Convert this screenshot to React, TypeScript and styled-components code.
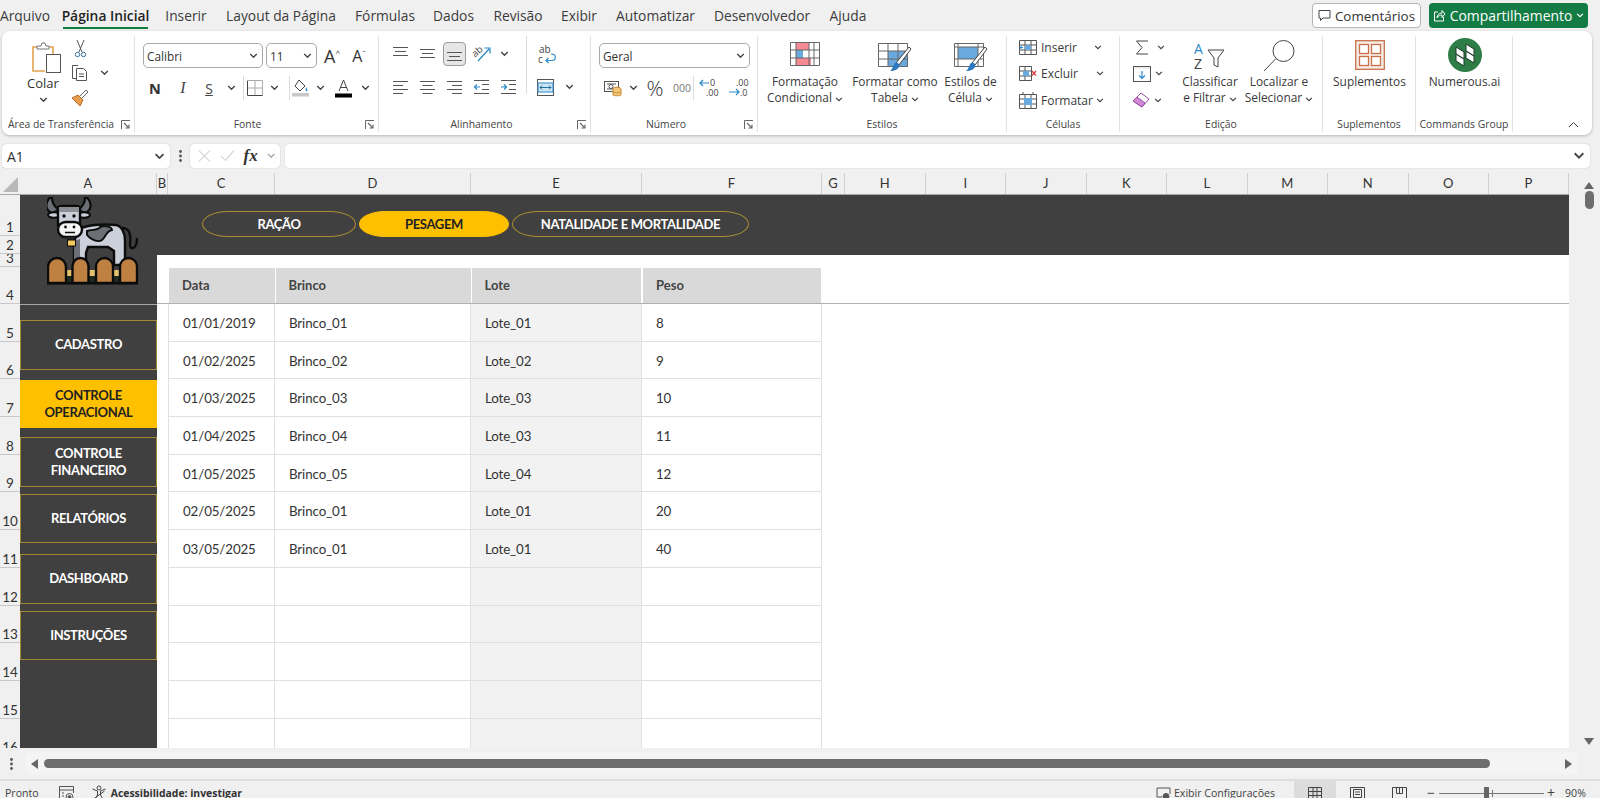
import React from "react";
import styled, { createGlobalStyle } from "styled-components";

const Global = createGlobalStyle`
  html, body { margin: 0; padding: 0; background: #f0f0f0; overflow: hidden; }
  #root { height: 798px; }
  * { box-sizing: border-box; }
`;
const UI = `"Open Sans", "Noto Sans", sans-serif`;
const CELL = `Lato, "Liberation Sans", sans-serif`;

const Page = styled.div`
  width: 1600px; height: 798px; overflow: hidden; background: #f0f0f0; font-family: ${UI}; color: #333;
  display: flex; flex-direction: column;
`;
const TabBar = styled.div`height: 31px; display: flex; align-items: center; position: relative; flex: none;`;
const Tab = styled.div<{ $w: number; $active?: boolean }>`
  width: ${p => p.$w}px; flex: none; height: 31px; line-height: 31px; text-align: center; font-size: 13.8px; white-space: nowrap; position: relative;
  color: ${p => p.$active ? "#1f1f1f" : "#3c3c3c"}; font-weight: ${p => p.$active ? 600 : 400};
  &::after { content: ""; display: ${p => p.$active ? "block" : "none"}; position: absolute; left: 14px; right: 14px; bottom: 2px; height: 2px; background: #107c41; }
`;
const TabRight = styled.div`margin-left: auto; display: flex; gap: 8px; padding-right: 12px; align-items: center;`;
const CommentBtn = styled.div`
  width: 109px; height: 25px; border: 1px solid #b5b5b5; border-radius: 4px; background: #fff; display: flex; align-items: center; justify-content: center; gap: 4px; font-size: 13.4px; color: #333;
`;
const ShareBtn = styled.div`
  width: 159px; height: 25px; border-radius: 4px; background: #137c45; color: #fff; display: flex; align-items: center; justify-content: center; gap: 4px; font-size: 13.9px; white-space: nowrap;
`;

const Ribbon = styled.div`
  flex: none; margin-left: 2px; width: 1590px; height: 104px; background: #fff; border-radius: 8px; box-shadow: 0 1px 3px rgba(0,0,0,.25);
  display: flex; position: relative; padding-top: 5px;
`;
const Group = styled.div<{ $w: number; $last?: boolean }>`
  width: ${p => p.$w}px; flex: none; height: 96px; display: flex; flex-direction: column; position: relative;
  border-right: ${p => p.$last ? "none" : "1px solid #e2e2e2"};
`;
const GroupBody = styled.div<{ $pl?: number }>`height: 80px; flex: none; display: flex; padding-left: ${p => p.$pl ?? 0}px;`;
const GroupLabel = styled.div<{ $pr?: number }>`
  height: 16px; line-height: 16px; text-align: center; font-size: 10.4px; color: #444; white-space: nowrap; padding-right: ${p => p.$pr ?? 0}px;
`;
const Launcher = styled.div`position: absolute; right: 3px; bottom: 2px; width: 10px; height: 10px; display: flex;`;
const Col = styled.div<{ $w?: number; $pl?: number; $mt?: number }>`
  display: flex; flex-direction: column; flex: none; ${p => p.$w ? `width: ${p.$w}px;` : ""} padding-left: ${p => p.$pl ?? 0}px; margin-top: ${p => p.$mt ?? 0}px;
`;
const Row = styled.div<{ $h?: number; $mt?: number }>`
  display: flex; align-items: center; flex: none; height: ${p => p.$h ?? 24}px; margin-top: ${p => p.$mt ?? 0}px;
`;
const Btn = styled.div<{ $w: number; $active?: boolean }>`
  width: ${p => p.$w}px; height: 24px; flex: none; display: flex; align-items: center; justify-content: center; position: relative; font-size: 13px;
  ${p => p.$active ? "&::before{content:'';position:absolute;left:2px;right:2px;top:0;bottom:0;background:#e6e6e6;border:1px solid #9b9b9b;border-radius:4px;}" : ""}
  & > * { position: relative; }
`;
const VSep = styled.div<{ $h?: number; $ml?: number }>`
  width: 1px; flex: none; height: ${p => p.$h ?? 24}px; background: #dcdcdc; margin-left: ${p => p.$ml ?? 0}px;
`;
const Select = styled.div<{ $w: number }>`
  width: ${p => p.$w}px; flex: none; height: 25px; border: 1px solid #a8a8a8; border-radius: 5px; display: flex; align-items: center; justify-content: space-between; padding: 0 4px 0 3px; font-size: 11.8px; color: #333; background: #fff;
`;
const BigBtn = styled.div<{ $w: number }>`
  width: ${p => p.$w}px; flex: none; display: flex; flex-direction: column; align-items: center; white-space: nowrap;
`;
const BigIcon = styled.div`height: 36px; margin-top: 2px; display: flex; align-items: center; justify-content: center;`;
const BigText = styled.div`font-size: 11.9px; line-height: 16.2px; text-align: center; color: #3a3a3a; margin-top: -1px;`;
const SmallLabel = styled.div`font-size: 12px; color: #3a3a3a; white-space: nowrap; display: flex; align-items: center; gap: 3px;`;
const CellRow = styled.div<{ $pl?: number }>`
  height: 26.5px; display: flex; align-items: center; padding-left: ${p => p.$pl ?? 12}px; flex: none;
`;
const CellIcon = styled.div`width: 22px; flex: none; display: flex; justify-content: flex-start;`;
const Bold = styled.span`font-weight: 700; font-family: ${UI}; font-size: 14.5px; color: #333;`;
const Ital = styled.span`font-style: italic; font-family: "Liberation Serif", serif; font-size: 16px; color: #444;`;
const FxMark = styled(Ital)`font-weight: 700; font-size: 17px; color: #333;`;
const Under = styled.span`text-decoration: underline; font-size: 14px; color: #444;`;
const Grow = styled.span<{ $s: number }>`font-size: ${p => p.$s}px; color: #333; line-height: 1;`;
const Caret = styled.sup`font-size: 8px;`;
const Percent = styled.span`font-size: 21px; font-weight: 300; color: #333; line-height: 1;`;
const Thin = styled.span`font-size: 10.5px; color: #777;`;
const CollapseBtn = styled.div`position: absolute; right: 13px; bottom: 7px; display: flex;`;

const FormulaBar = styled.div`flex: none; margin-top: 9px; height: 24px; padding-left: 2px; display: flex; align-items: stretch;`;
const Box = styled.div<{ $w: number }>`
  width: ${p => p.$w}px; flex: none; background: #fff; border-radius: 4px; box-shadow: 0 0 1px rgba(0,0,0,.35); display: flex; align-items: center; justify-content: space-between; padding: 0 5px; font-size: 14px; color: #333;
`;
const Dots = styled.div`width: 20px; flex: none; display: flex; align-items: center; justify-content: center;`;
const Spacer = styled.div<{ $w: number }>`width: ${p => p.$w}px; flex: none;`;
const FxItems = styled.div`display: flex; align-items: center; gap: 9px; width: 100%; padding-left: 3px;`;

const SheetWrap = styled.div`flex: none; margin-top: 5px; height: 575px; display: flex;`;
const SheetLeft = styled.div`width: 1569px; flex: none; display: flex; flex-direction: column;`;
const ColHeads = styled.div`height: 22px; flex: none; display: flex; background: #f0f0f0; border-bottom: 1px solid #a8a8a8;`;
const Corner = styled.div`width: 20px; flex: none; display: flex; align-items: flex-end; justify-content: flex-end; padding: 0 2px 2px 0;`;
const ColHead = styled.div<{ $w: number }>`
  width: ${p => p.$w}px; flex: none; text-align: center; font-family: ${CELL}; font-size: 13px; line-height: 21px; color: #333; border-right: 1px solid #cfcfcf;
`;
const SheetBody = styled.div`height: 553px; flex: none; display: flex; overflow: hidden;`;
const RowHeads = styled.div`width: 20px; flex: none; display: flex; flex-direction: column;`;
const RowHead = styled.div<{ $h: number }>`
  height: ${p => p.$h}px; flex: none; border-bottom: 1px solid #c8c8c8; font-family: ${CELL}; font-size: 13.5px; line-height: 14px; color: #333; display: flex; align-items: flex-end; justify-content: center; padding-bottom: 1px; overflow: hidden;
`;
const Sidebar = styled.div`width: 137px; flex: none; background: #404040; display: flex; flex-direction: column; padding-bottom: 20px;`;
const CowArea = styled.div`height: 110px; flex: none; border-bottom: 1px solid #a8a8a8; padding: 2px 0 0 27px; display: flex; margin-bottom: 15px;`;
const NavBtn = styled.div<{ $h: number; $mt?: number; $active?: boolean }>`
  height: ${p => p.$h}px; margin-top: ${p => p.$mt ?? 0}px; flex: none; width: 137px; display: flex; align-items: center; justify-content: center; text-align: center;
  font-family: ${CELL}; font-weight: 700; font-size: 13px; letter-spacing: -0.35px; line-height: 17px; padding-bottom: 1px;
  color: ${p => p.$active ? "#222" : "#fff"}; background: ${p => p.$active ? "#ffc000" : "#404040"};
  border: 1px solid ${p => p.$active ? "#ffc000" : "#a38836"};
`;
const Main = styled.div`flex: 1; display: flex; flex-direction: column; background: #fff; min-width: 0;`;
const Band = styled.div`height: 60px; flex: none; background: #404040; display: flex; gap: 3px; padding: 16px 0 0 45px;`;
const Pill = styled.div<{ $w: number; $active?: boolean }>`
  width: ${p => p.$w}px; height: 26px; flex: none; border-radius: 26px / 13px; display: flex; align-items: center; justify-content: center;
  font-family: ${CELL}; font-weight: 700; font-size: 13px; letter-spacing: -0.35px;
  color: ${p => p.$active ? "#222" : "#fff"}; background: ${p => p.$active ? "#ffc000" : "transparent"};
  border: 1px solid ${p => p.$active ? "#ffc000" : "#a98c33"};
`;
const HeadZone = styled.div`height: 49px; flex: none; border-bottom: 1px solid #b0b0b0; padding: 13px 0 0 12px; display: flex;`;
const HeadCell = styled.div<{ $w: number; $ml: number }>`
  width: ${p => p.$w}px; margin-left: ${p => p.$ml}px; height: 35px; flex: none; background: #d9d9d9; font-family: ${CELL}; font-weight: 700; font-size: 13px; color: #444; padding-left: 13px; line-height: 35px;
`;
const TRow = styled.div`height: 37.7px; flex: none; display: flex; margin-left: 11px;`;
const TCell = styled.div<{ $w: number; $first?: boolean; $shade?: boolean }>`
  width: ${p => p.$w}px; flex: none; font-family: ${CELL}; font-size: 13.3px; letter-spacing: -0.1px; color: #333; padding-left: 14px; line-height: 38px;
  border-bottom: 1px solid #e0e0e0; border-right: 1px solid #e0e0e0; ${p => p.$first ? "border-left: 1px solid #e0e0e0;" : ""}
  background: ${p => p.$shade ? "#f2f2f2" : "#fff"};
`;
const VScroll = styled.div`width: 31px; flex: none; display: flex; flex-direction: column; align-items: center; padding: 9px 0 3px 9px;`;
const VThumb = styled.div`width: 9px; height: 18px; background: #6e6e6e; border-radius: 5px; margin-top: 2px;`;
const VDown = styled.div`margin-top: auto; display: flex;`;
const HScrollBar = styled.div`height: 33px; flex: none; display: flex; align-items: center; border-bottom: 2px solid #dedede;`;
const HDots = styled.div`width: 25px; flex: none; display: flex; justify-content: center; padding-right: 3px;`;
const HTrack = styled.div`width: 1553px; height: 23px; flex: none; background: #f4f4f4; border-radius: 6px; display: flex; align-items: center; padding: 0 4px 0 6px;`;
const HThumb = styled.div`width: 1446px; height: 9px; background: #6e6e6e; border-radius: 5px; margin-left: 6px;`;
const HEnd = styled.div`margin-left: auto; margin-right: 2px; display: flex;`;
const Status = styled.div`height: 24px; flex: none; display: flex; align-items: center; font-size: 10.6px; color: #444; padding-left: 5px; white-space: nowrap;`;
const StatusText = styled.span<{ $bold?: boolean }>`font-weight: ${p => p.$bold ? 700 : 400}; color: ${p => p.$bold ? "#333" : "#444"}; font-size: ${p => p.$bold ? "10.4px" : "10.6px"};`;
const ZoomSign = styled.span`font-size: 14px; color: #444; line-height: 1;`;
const StatusGap = styled.div<{ $w: number }>`width: ${p => p.$w}px; flex: none; display: flex; justify-content: center;`;
const ViewBtn = styled.div<{ $active?: boolean }>`
  width: 42px; height: 24px; flex: none; display: flex; align-items: center; justify-content: center; background: ${p => p.$active ? "#dcdcdc" : "transparent"};
`;
const Slider = styled.div`width: 105px; height: 1px; background: #777; position: relative; flex: none;`;
const SliderThumb = styled.div`position: absolute; left: 45px; top: -6px; width: 5px; height: 13px; background: #666;`;
const SliderTick = styled.div`position: absolute; left: 53px; top: -3px; width: 1px; height: 7px; background: #777;`;

/* icons */
const Chev = ({ c = "#444", w = 9 }: { c?: string; w?: number }) => (
  <svg width={w} height={w * 0.62} viewBox="0 0 9 6"><path d="M1 1l3.5 3.5L8 1" fill="none" stroke={c} strokeWidth="1.5" /></svg>
);
const LauncherIcon = () => (
  <svg width="10" height="10" viewBox="0 0 10 10" fill="none" stroke="#666"><path d="M.5 9V.5H9" /><path d="M3 3l5 5M8 4.500V8H4.500" strokeWidth="1.100" /></svg>
);
const Paste = () => (
  <svg width="37" height="33" viewBox="-6 0 37 33" fill="none">
    <path d="M9 6H2v24h12" stroke="#e2a24f" strokeWidth="1.600" />
    <path d="M17 6h5v7" stroke="#e2a24f" strokeWidth="1.600" />
    <path d="M6 8V5h4l1-3h3l1 3h3v3z" fill="#fff" stroke="#777" />
    <rect x="15.500" y="13.500" width="14" height="18" fill="#fff" stroke="#555" />
  </svg>
);
const Scissors = () => (
  <svg width="13" height="19" viewBox="0 0 13 19" fill="none">
    <path d="M3 1l5 12M10 1L5 13" stroke="#555" />
    <circle cx="3.500" cy="15.500" r="2.200" stroke="#2f6f9f" /><circle cx="9.500" cy="15.500" r="2.200" stroke="#2f6f9f" />
  </svg>
);
const Copy = () => (
  <svg width="18" height="18" viewBox="0 0 18 18" fill="none" stroke="#555">
    <path d="M7 1.500H1.500v13H5" /><path d="M5.500 4.500h7l3 3v9h-10z" fill="#fff" /><path d="M8 10h5M8 12.500h5" />
  </svg>
);
const Brush = () => (
  <svg width="18" height="18" viewBox="0 0 18 18" fill="none">
    <path d="M1 9l6-3 5 5-3 6z" fill="#e8a050" stroke="#b86a20" />
    <path d="M9 7l6-6 2 2-6 6" stroke="#666" fill="#fff" />
  </svg>
);
const Lines = ({ ys, xs }: { ys: number[]; xs: [number, number][] }) => (
  <svg width="17" height="16" viewBox="0 0 17 16" stroke="#555" fill="none">
    {ys.map((y, i) => <path key={i} d={`M${xs[i][0]} ${y}H${xs[i][1]}`} />)}
  </svg>
);
const AlignTop = () => <Lines ys={[1.5, 5.5, 9.5]} xs={[[1, 16], [3, 14], [1, 16]]} />;
const AlignMid = () => <Lines ys={[3.5, 7.5, 11.5]} xs={[[1, 16], [3, 14], [1, 16]]} />;
const AlignBot = () => <Lines ys={[6.5, 10.5, 14.5]} xs={[[1, 16], [3, 14], [1, 16]]} />;
const AlignL = () => <Lines ys={[2.5, 6.5, 10.5, 14.5]} xs={[[1, 16], [1, 11], [1, 16], [1, 11]]} />;
const AlignC = () => <Lines ys={[2.5, 6.5, 10.5, 14.5]} xs={[[1, 16], [3.5, 13.5], [1, 16], [3.5, 13.5]]} />;
const AlignR = () => <Lines ys={[2.5, 6.5, 10.5, 14.5]} xs={[[1, 16], [6, 16], [1, 16], [6, 16]]} />;
const Indent = ({ out }: { out?: boolean }) => (
  <svg width="17" height="16" viewBox="0 0 17 16" fill="none">
    <path d="M1 1.500h15M1 14.500h15M9 5.500h7M9 10.500h7" stroke="#555" />
    <path d={out ? "M7 8H1.500M4 5.500L1.500 8 4 10.500" : "M1 8h5.500M4 5.500L6.500 8 4 10.500"} stroke="#2b88c8" strokeWidth="1.200" />
  </svg>
);
const Orient = () => (
  <svg width="22" height="20" viewBox="-1 -1 22 20" fill="none">
    <text x="1" y="11" fontSize="9.500" fontFamily="Open Sans" fill="#444" transform="rotate(-40 4 9)">ab</text>
    <path d="M6 16L17 4M12.500 3h5.500v5.500" stroke="#2b88c8" strokeWidth="1.200" />
  </svg>
);
const WrapIco = () => (
  <svg width="19" height="21" viewBox="0 0 19 21" fill="none">
    <text x="2" y="9" fontSize="10" fontFamily="Open Sans" fill="#444">ab</text>
    <text x="1" y="19" fontSize="10" fontFamily="Open Sans" fill="#444">c</text>
    <path d="M14 10h1a2.500 2.500 0 010 6.500H9M11.500 14L9 16.500l2.500 2.500" stroke="#2b88c8" strokeWidth="1.200" />
  </svg>
);
const Merge = () => (
  <svg width="17" height="17" viewBox="0 0 17 17" fill="none">
    <rect x=".5" y=".5" width="16" height="16" stroke="#555" />
    <rect x="1" y="4" width="15" height="9" fill="#cfe6f5" stroke="#2b88c8" />
    <path d="M3 8.500h11M5 6.500l-2 2 2 2M12 6.500l2 2-2 2" stroke="#1f6f9f" />
  </svg>
);
const Borders = () => (
  <svg width="16" height="16" viewBox="0 0 16 16" fill="none">
    <path d="M.5.500h15v15H.5z" stroke="#aaa" /><path d="M8 .5v15M.5 8h15" stroke="#aaa" />
    <path d="M.5 15.500h15M.5 1v14" stroke="#444" />
  </svg>
);
const Fill = () => (
  <svg width="17" height="18" viewBox="0 0 17 18" fill="none">
    <path d="M7 1l6 6-5 5-5-5z" stroke="#444" fill="#fff" />
    <path d="M14 8c1 2 2 3 1 4s-2-1-1-4z" fill="#2b88c8" />
    <rect y="14" width="17" height="3.500" fill="#c8c8c8" />
  </svg>
);
const FontColor = () => (
  <svg width="17" height="19" viewBox="0 0 17 19" fill="none">
    <path d="M4 12l4.500-11L13 12M5.500 8.500h6" stroke="#444" />
    <rect y="14.500" width="17" height="4" fill="#000" />
  </svg>
);
const Accounting = () => (
  <svg width="18" height="17" viewBox="0 0 18 17" fill="none">
    <rect x=".5" y="1.500" width="14" height="10" stroke="#555" fill="#fff" />
    <path d="M3 4h9M3 9h6" stroke="#555" /><circle cx="7" cy="6.500" r="2" stroke="#555" />
    <ellipse cx="13" cy="9" rx="4" ry="1.800" fill="#f2c77e" stroke="#c98a30" />
    <path d="M9 9v6c0 1 8 1 8 0V9" fill="#f2c77e" stroke="#c98a30" />
    <path d="M9 12c0 1 8 1 8 0" stroke="#c98a30" />
  </svg>
);
const Dec = ({ more }: { more?: boolean }) => (
  <svg width="24" height="20" viewBox="0 0 24 20">
    <text x={more ? 8 : 11} y="8" fontSize="9" fontFamily="Open Sans" fill="#444">{more ? ".00" : "0"}</text>
    <text x={more ? 12 : 7} y="18" fontSize="9" fontFamily="Open Sans" fill="#444">{more ? ".0" : ".00"}</text>
    <path d={more ? "M1 14h10M8 11l3 3-3 3" : "M10 5H1M4 2L1 5l3 3"} stroke="#2b88c8" fill="none" strokeWidth="1.200" />
  </svg>
);
const CondFormat = () => (
  <svg width="30" height="28" viewBox="0 0 30 28" fill="none">
    <rect x=".5" y=".5" width="29" height="23" fill="#fff" />
    <rect x="6" y="1" width="13" height="7" fill="#f58a93" />
    <rect x="6" y="16" width="15" height="7" fill="#f58a93" />
    <rect x="6" y="8" width="7" height="8" fill="#6aa9de" />
    <path d="M.5.500h29v23H.500zM.5 8h29M.5 16h29M6 .5v23M19 .5v23M24 .5v23" stroke="#666" />
  </svg>
);
const TableBrush = ({ full }: { full?: boolean }) => (
  <svg width="34" height="30" viewBox="0 -2 34 30" fill="none">
    <rect x=".5" y=".5" width="29" height="23" fill="#fff" />
    {full ? <rect x="4" y="4" width="20" height="12" fill="#6aa9de" /> : <rect x="10" y="8" width="20" height="16" fill="#6aa9de" />}
    <path d={full ? "M.5.500h29v23H.500zM.5 4h29M.5 16h29M4 .5v23M24 .5v23" : "M.5.500h29v23H.500zM.5 8h29M.5 16h29M10 .5v23M20 .5v23"} stroke="#666" />
    <path d="M18 20L31 4l2 2-12 16" fill="#fff" stroke="#444" />
    <path d="M17 20c3-1 5 1 4 4-1 2-4 4-9 4 3-2 3-6 5-8z" fill="#2b78c0" />
  </svg>
);
const InsertIco = () => (
  <svg width="18" height="15" viewBox="0 0 18 15" fill="none">
    <path d="M.5.500h17v14H.500zM.5 5h17M.5 10h17M6 .5v14M12 .5v14" stroke="#555" />
    <rect x="6" y="5" width="6" height="5" fill="#6aa9de" />
    <path d="M4 7.500h-3M3 5.500L1 7.500l2 2" stroke="#2b88c8" />
  </svg>
);
const DeleteIco = () => (
  <svg width="18" height="15" viewBox="0 0 18 15" fill="none">
    <path d="M.5.500h12v14H.500zM.5 5h12M.5 10h12M6 .5v14" stroke="#555" />
    <rect x="4" y="5" width="6" height="5" fill="#6aa9de" />
    <path d="M13 5l4 4.500M17 5l-4 4.500" stroke="#d83b3b" strokeWidth="1.200" />
  </svg>
);
const FormatIco = () => (
  <svg width="18" height="17" viewBox="0 0 18 17" fill="none">
    <path d="M.5 2.500h17v14H.500zM.5 7h17M.5 12h17M6 2.500v14M12 2.500v14" stroke="#555" />
    <rect x="5" y="6" width="8" height="7" fill="#6aa9de" />
    <path d="M4 0v3M14 0v3" stroke="#555" />
  </svg>
);
const FillDown = () => (
  <svg width="18" height="16" viewBox="0 0 18 16" fill="none">
    <rect x=".5" y=".5" width="17" height="15" stroke="#555" fill="#eee" />
    <rect x="1" y="3" width="16" height="12" fill="#fff" />
    <path d="M9 5v7M6 9.500l3 3 3-3" stroke="#2b88c8" strokeWidth="1.200" />
  </svg>
);
const Eraser = () => (
  <svg width="18" height="16" viewBox="0 0 18 16" fill="none">
    <path d="M1 9l8-8 8 6-7 8z" fill="#fff" stroke="#9a4fa8" />
    <path d="M1 9l4-4 8 6-3 4z" fill="#d28ad6" stroke="#9a4fa8" />
  </svg>
);
const SortFilter = () => (
  <svg width="32" height="31" viewBox="0 0 32 31" fill="none">
    <text x="0" y="13" fontSize="14" fontFamily="Open Sans" fill="#2b88c8">A</text>
    <text x="0" y="28" fontSize="14" fontFamily="Open Sans" fill="#444">Z</text>
    <path d="M14 9h16l-6 8v9l-4-2v-7z" fill="#fff" stroke="#444" />
  </svg>
);
const Search = () => (
  <svg width="32" height="32" viewBox="0 0 32 32" fill="none" stroke="#444">
    <circle cx="20.500" cy="11" r="10.500" /><path d="M13 18.500L1 31" />
  </svg>
);
const Suppl = () => (
  <svg width="30" height="33" viewBox="0 0 30 33" fill="none" stroke="#c9704a" strokeWidth="1.300">
    <rect x=".7" y=".7" width="28.600" height="28.600" fill="#f7ece6" />
    <rect x="4.500" y="4.500" width="9" height="9" fill="#fff" /><rect x="16.500" y="4.500" width="9" height="9" fill="#fff" />
    <rect x="4.500" y="16.500" width="9" height="9" fill="#fff" /><rect x="16.500" y="16.500" width="9" height="9" fill="#fff" />
  </svg>
);
const Numerous = () => (
  <svg width="34" height="37" viewBox="0 0 34 37">
    <circle cx="17" cy="17" r="17" fill="#2e7d46" />
    <path d="M8 9l8 5v14l-8-5zM18 6l8 5v14l-8-5z" fill="#fff" stroke="#1d3b28" strokeWidth="1" />
    <path d="M8 16l8 5M18 13l8 5" stroke="#1d3b28" strokeWidth="1.200" fill="none" />
  </svg>
);
const Sigma = () => (
  <svg width="14" height="15" viewBox="0 0 14 15" fill="none" stroke="#444"><path d="M13 1H1.500L7 7.500 1.500 14H13" /></svg>
);
const Bubble = () => (
  <svg width="13" height="13" viewBox="0 0 13 13" fill="none" stroke="#444"><path d="M1 1.500h11v7.500H5L2.500 11.500V9H1z" /></svg>
);
const Share = () => (
  <svg width="13" height="13" viewBox="0 0 13 13" fill="none" stroke="#fff"><path d="M5 3H1.500v9h9V8" /><path d="M4 9c0-3 2-5 5-5V1.500l3 3.500-3 3.500V6c-2 0-4 1-5 3z" /></svg>
);
const Cow = () => (
  <svg width="92" height="90" viewBox="7 4 92 90">
    <path d="M82 35C90 35 91 42 90 52C90 57 97 57 97 45" fill="none" stroke="#0c0c0c" strokeWidth="2.400" />
    <path d="M38 36C50 31 68 31 76 32C82 33 85 40 85 48V72H74V58L68 54H48L46 60V72H34V50z" fill="#ccd0da" stroke="#0c0c0c" strokeWidth="2.400" />
    <path d="M34 48L40 46V70H34z" fill="#6d6f77" />
    <path d="M47 38C52 36 58 38 60 34C66 32 72 34 72 37C66 38 66 44 62 47C58 50 50 46 47 42z" fill="#6d6f77" stroke="#0c0c0c" strokeWidth="1.900" />
    <path d="M9.500 5C5 10 5 17 12 20L19 17C15 14 12 11 12 5z" fill="#6d6f77" stroke="#0c0c0c" strokeWidth="2.200" />
    <path d="M47.500 5C52 10 52 17 45 20L38 17C42 14 45 11 45 5z" fill="#6d6f77" stroke="#0c0c0c" strokeWidth="2.200" />
    <ellipse cx="14" cy="22" rx="6" ry="2.800" fill="#ccd0da" stroke="#0c0c0c" strokeWidth="2" />
    <ellipse cx="44" cy="22" rx="6" ry="2.800" fill="#ccd0da" stroke="#0c0c0c" strokeWidth="2" />
    <path d="M18 16C18 14 20 13 22 13H36C38 13 40 14 40 16V32H18z" fill="#ccd0da" stroke="#0c0c0c" strokeWidth="2.400" />
    <path d="M19 14H39V19H19z" fill="#8c8e96" />
    <circle cx="24" cy="23" r="1.700" fill="#0c0c0c" /><circle cx="34" cy="23" r="1.700" fill="#0c0c0c" />
    <rect x="18" y="29" width="24" height="15" rx="7.500" fill="#f4f4f4" stroke="#0c0c0c" strokeWidth="2.400" />
    <circle cx="25.500" cy="34" r="1.400" fill="#0c0c0c" /><circle cx="34" cy="34" r="1.400" fill="#0c0c0c" />
    <path d="M25 39.500h10" stroke="#0c0c0c" strokeWidth="1.500" />
    <path d="M26 44h9l-1 3h-7z" fill="#222" />
    <rect x="27.500" y="47" width="8" height="6" fill="#f2c95c" stroke="#0c0c0c" strokeWidth="1" />
    <rect x="26" y="77" width="6" height="6" fill="#e3c26b" /><rect x="48" y="77" width="8" height="6" fill="#e3c26b" /><rect x="73" y="77" width="7" height="6" fill="#e3c26b" />
    <rect x="26" y="83" width="6" height="6" fill="#1d2a1d" /><rect x="48" y="83" width="8" height="6" fill="#1d2a1d" /><rect x="73" y="83" width="7" height="6" fill="#1d2a1d" />
    {[[8, 18], [32.500, 16], [56, 17], [80, 17]].map(([x, w]) => (
      <path key={x} d={`M${x} 90V${65 + w / 2}a${w / 2} ${w / 2} 0 01${w} 0V90z`} fill="#bf8142" stroke="#0c0c0c" strokeWidth="2.400" />
    ))}
    <rect x="7" y="89" width="91" height="2.500" fill="#0c0c0c" />
  </svg>
);
const Tri = ({ d }: { d: "l" | "r" | "u" | "d" }) => {
  const p = { l: "M7 0v10L0 5z", r: "M0 0v10l7-5z", u: "M0 7h10L5 0z", d: "M0 0h10L5 7z" }[d];
  const w = d === "l" || d === "r" ? 7 : 10;
  const h = d === "l" || d === "r" ? 10 : 7;
  return <svg width={w} height={h} viewBox={`0 0 ${w} ${h}`}><path d={p} fill="#666" /></svg>;
};
const VDots = () => (
  <svg width="3" height="12" viewBox="0 0 3 12" fill="#555"><circle cx="1.500" cy="1.500" r="1.400" /><circle cx="1.500" cy="6" r="1.400" /><circle cx="1.500" cy="10.500" r="1.400" /></svg>
);

const columns: [string, number][] = [["B", 11], ["C", 107], ["D", 196], ["E", 171], ["F", 180], ["G", 23], ["H", 80.5], ["I", 80.5], ["J", 80.5], ["K", 80.5], ["L", 80.5], ["M", 80.5], ["N", 80.5], ["O", 80.5], ["P", 80]];
const rowHeads: [string, number][] = [["1", 41], ["2", 18], ["3", 13], ["4", 37], ...[5, 6, 7, 8, 9, 10, 11, 12, 13, 14, 15, 16].map((n): [string, number] => [String(n), 37.7])];
const widths = [107, 196, 171, 180];
const headCells: [string, number, number][] = [["Data", 105.5, 0], ["Brinco", 195, 1], ["Lote", 169.5, 1], ["Peso", 177.5, 2]];
const data = [
  ["01/01/2019", "Brinco_01", "Lote_01", "8"],
  ["01/02/2025", "Brinco_02", "Lote_02", "9"],
  ["01/03/2025", "Brinco_03", "Lote_03", "10"],
  ["01/04/2025", "Brinco_04", "Lote_03", "11"],
  ["01/05/2025", "Brinco_05", "Lote_04", "12"],
  ["02/05/2025", "Brinco_01", "Lote_01", "20"],
  ["03/05/2025", "Brinco_01", "Lote_01", "40"],
  ["", "", "", ""], ["", "", "", ""], ["", "", "", ""], ["", "", "", ""], ["", "", "", ""],
];
const tabs: [string, number, boolean?][] = [["Arquivo", 49], ["Página Inicial", 113, true], ["Inserir", 48], ["Layout da Página", 142], ["Fórmulas", 66], ["Dados", 71], ["Revisão", 58], ["Exibir", 64], ["Automatizar", 89], ["Desenvolvedor", 124], ["Ajuda", 48]];

export default function App() {
  return (
    <Page>
      <Global />
      <TabBar>
        {tabs.map(([t, w, a]) => <Tab key={t} $w={w} $active={a}>{t}</Tab>)}
        <TabRight>
          <CommentBtn><Bubble />Comentários</CommentBtn>
          <ShareBtn><Share />Compartilhamento <Chev c="#fff" w={8} /></ShareBtn>
        </TabRight>
      </TabBar>

      <Ribbon>
        <Group $w={133}>
          <GroupBody $pl={20}>
            <Col $w={42}>
              <Row $h={36} $mt={3}><Btn $w={42}><Paste /></Btn></Row>
              <Row $h={18} $mt={-1}><Btn $w={42}>Colar</Btn></Row>
              <Row $h={12} $mt={2}><Btn $w={42}><Chev /></Btn></Row>
            </Col>
            <Col $w={60} $pl={4}>
              <Row $h={24}><Btn $w={24}><Scissors /></Btn></Row>
              <Row $h={25}><Btn $w={24}><Copy /></Btn><Btn $w={24}><Chev /></Btn></Row>
              <Row $h={25}><Btn $w={24}><Brush /></Btn></Row>
            </Col>
          </GroupBody>
          <GroupLabel $pr={14}>Área de Transferência</GroupLabel>
          <Launcher><LauncherIcon /></Launcher>
        </Group>

        <Group $w={244}>
          <GroupBody $pl={8}>
            <Col>
              <Row $h={25} $mt={7}>
                <Select $w={120}>Calibri<Chev /></Select>
                <Spacer $w={3} />
                <Select $w={51}>11<Chev /></Select>
                <Btn $w={30}><Grow $s={18}>A<Caret>^</Caret></Grow></Btn>
                <Btn $w={24}><Grow $s={16}>A<Caret>ˇ</Caret></Grow></Btn>
              </Row>
              <Row $h={24} $mt={8}>
                <Btn $w={24}><Bold>N</Bold></Btn>
                <Btn $w={32}><Ital>I</Ital></Btn>
                <Btn $w={20}><Under>S</Under></Btn>
                <Btn $w={24}><Chev /></Btn>
                <VSep />
                <Btn $w={21}><Borders /></Btn>
                <Btn $w={18}><Chev /></Btn>
                <VSep $ml={6} />
                <Btn $w={20}><Fill /></Btn>
                <Btn $w={20}><Chev /></Btn>
                <Btn $w={26}><FontColor /></Btn>
                <Btn $w={18}><Chev /></Btn>
              </Row>
            </Col>
          </GroupBody>
          <GroupLabel $pr={18}>Fonte</GroupLabel>
          <Launcher><LauncherIcon /></Launcher>
        </Group>

        <Group $w={212}>
          <GroupBody $pl={8}>
            <Col $w={139}>
              <Row $h={26} $mt={5}>
                <Btn $w={27}><AlignTop /></Btn><Btn $w={27}><AlignMid /></Btn>
                <Btn $w={27} $active><AlignBot /></Btn><Btn $w={27}><Orient /></Btn><Btn $w={18}><Chev /></Btn>
              </Row>
              <Row $h={24} $mt={8}>
                <Btn $w={27}><AlignL /></Btn><Btn $w={27}><AlignC /></Btn><Btn $w={27}><AlignR /></Btn>
                <Btn $w={27}><Indent out /></Btn><Btn $w={27}><Indent /></Btn>
              </Row>
            </Col>
            <VSep $h={58} />
            <Col>
              <Row $h={26} $mt={5}><Btn $w={38}><WrapIco /></Btn></Row>
              <Row $h={24} $mt={8}><Btn $w={36}><Merge /></Btn><Btn $w={12}><Chev /></Btn></Row>
            </Col>
          </GroupBody>
          <GroupLabel $pr={6}>Alinhamento</GroupLabel>
          <Launcher><LauncherIcon /></Launcher>
        </Group>

        <Group $w={167}>
          <GroupBody $pl={8}>
            <Col>
              <Row $h={25} $mt={7}><Select $w={151}>Geral<Chev /></Select></Row>
              <Row $h={24} $mt={8}>
                <Btn $w={28}><Accounting /></Btn><Btn $w={12}><Chev /></Btn>
                <Btn $w={32}><Percent>%</Percent></Btn>
                <Btn $w={22}><Thin>000</Thin></Btn>
                <VSep />
                <Btn $w={34}><Dec /></Btn><Btn $w={24}><Dec more /></Btn>
              </Row>
            </Col>
          </GroupBody>
          <GroupLabel $pr={16}>Número</GroupLabel>
          <Launcher><LauncherIcon /></Launcher>
        </Group>

        <Group $w={249}>
          <GroupBody>
            <BigBtn $w={94}><BigIcon><CondFormat /></BigIcon><BigText>Formatação<br />Condicional <Chev w={8} /></BigText></BigBtn>
            <BigBtn $w={86}><BigIcon><TableBrush /></BigIcon><BigText>Formatar como<br />Tabela <Chev w={8} /></BigText></BigBtn>
            <BigBtn $w={65}><BigIcon><TableBrush full /></BigIcon><BigText>Estilos de<br />Célula <Chev w={8} /></BigText></BigBtn>
          </GroupBody>
          <GroupLabel>Estilos</GroupLabel>
        </Group>

        <Group $w={113}>
          <GroupBody>
            <Col $w={112} $mt={-2}>
              <CellRow><CellIcon><InsertIco /></CellIcon><SmallLabel>Inserir<Spacer $w={11} /><Chev w={8} /></SmallLabel></CellRow>
              <CellRow><CellIcon><DeleteIco /></CellIcon><SmallLabel>Excluir<Spacer $w={12} /><Chev w={8} /></SmallLabel></CellRow>
              <CellRow><CellIcon><FormatIco /></CellIcon><SmallLabel>Formatar<Chev w={8} /></SmallLabel></CellRow>
            </Col>
          </GroupBody>
          <GroupLabel>Células</GroupLabel>
        </Group>

        <Group $w={203}>
          <GroupBody>
            <Col $w={56} $mt={-2}>
              <CellRow $pl={15}><CellIcon><Sigma /></CellIcon><Chev w={8} /></CellRow>
              <CellRow $pl={13}><CellIcon><FillDown /></CellIcon><Chev w={8} /></CellRow>
              <CellRow $pl={12}><CellIcon><Eraser /></CellIcon><Chev w={8} /></CellRow>
            </Col>
            <BigBtn $w={68}><BigIcon><SortFilter /></BigIcon><BigText>Classificar<br />e Filtrar <Chev w={8} /></BigText></BigBtn>
            <BigBtn $w={70}><BigIcon><Search /></BigIcon><BigText>Localizar e<br />Selecionar <Chev w={8} /></BigText></BigBtn>
          </GroupBody>
          <GroupLabel>Edição</GroupLabel>
        </Group>

        <Group $w={93}>
          <GroupBody>
            <BigBtn $w={93}><BigIcon><Suppl /></BigIcon><BigText>Suplementos</BigText></BigBtn>
          </GroupBody>
          <GroupLabel>Suplementos</GroupLabel>
        </Group>

        <Group $w={97}>
          <GroupBody>
            <BigBtn $w={97}><BigIcon><Numerous /></BigIcon><BigText>Numerous.ai</BigText></BigBtn>
          </GroupBody>
          <GroupLabel>Commands Group</GroupLabel>
        </Group>
        <CollapseBtn><svg width="11" height="7" viewBox="0 0 11 7" fill="none" stroke="#444"><path d="M1 6l4.500-4.500L10 6" /></svg></CollapseBtn>
      </Ribbon>

      <FormulaBar>
        <Box $w={168}>A1<Chev c="#444" w={11} /></Box>
        <Dots><VDots /></Dots>
        <Box $w={90}>
          <FxItems>
            <svg width="14" height="14" viewBox="0 0 14 14" stroke="#bbb" fill="none"><path d="M1 1l12 12M13 1L1 13" /></svg>
            <svg width="16" height="14" viewBox="0 0 16 14" stroke="#bbb" fill="none"><path d="M1 7l5 5L15 1" /></svg>
            <FxMark>fx</FxMark>
            <Chev c="#aaa" w={9} />
          </FxItems>
        </Box>
        <Spacer $w={5} />
        <Box $w={1305}><span /><Chev c="#444" w={12} /></Box>
      </FormulaBar>

      <SheetWrap>
        <SheetLeft>
          <ColHeads>
            <Corner><svg width="15" height="15" viewBox="0 0 15 15"><path d="M15 0v15H0z" fill="#b8b8b8" /></svg></Corner>
            <ColHead $w={137}>A</ColHead>
            {columns.map(([c, w]) => <ColHead key={c} $w={w}>{c}</ColHead>)}
          </ColHeads>
          <SheetBody>
            <RowHeads>
              {rowHeads.map(([n, h]) => <RowHead key={n} $h={h}>{n}</RowHead>)}
            </RowHeads>
            <Sidebar>
              <CowArea><Cow /></CowArea>
              <NavBtn $h={50}>CADASTRO</NavBtn>
              <NavBtn $h={48} $mt={10} $active>CONTROLE<br />OPERACIONAL</NavBtn>
              <NavBtn $h={50} $mt={9}>CONTROLE<br />FINANCEIRO</NavBtn>
              <NavBtn $h={49} $mt={7}>RELATÓRIOS</NavBtn>
              <NavBtn $h={50} $mt={11}>DASHBOARD</NavBtn>
              <NavBtn $h={49} $mt={7}>INSTRUÇÕES</NavBtn>
            </Sidebar>
            <Main>
              <Band>
                <Pill $w={154}>RAÇÃO</Pill>
                <Pill $w={150} $active>PESAGEM</Pill>
                <Pill $w={237}>NATALIDADE E MORTALIDADE</Pill>
              </Band>
              <HeadZone>
                {headCells.map(([h, w, ml]) => <HeadCell key={h} $w={w} $ml={ml}>{h}</HeadCell>)}
              </HeadZone>
              {data.map((r, i) => (
                <TRow key={i}>
                  {r.map((v, j) => <TCell key={j} $w={widths[j]} $first={j === 0} $shade={j === 2}>{v}</TCell>)}
                </TRow>
              ))}
            </Main>
          </SheetBody>
        </SheetLeft>
        <VScroll>
          <Tri d="u" />
          <VThumb />
          <VDown><Tri d="d" /></VDown>
        </VScroll>
      </SheetWrap>

      <HScrollBar>
        <HDots><VDots /></HDots>
        <HTrack><Tri d="l" /><HThumb /><HEnd><Tri d="r" /></HEnd></HTrack>
      </HScrollBar>

      <Status>
        <StatusText>Pronto</StatusText>
        <StatusGap $w={20} />
        <svg width="15" height="15" viewBox="0 0 15 15" fill="none" stroke="#555"><path d="M.5 14V.5h14V7M.5 4h14M3 7h2M3 10h2" /><circle cx="10.500" cy="11" r="3.500" /><circle cx="10.500" cy="11" r="1.500" fill="#555" /></svg>
        <StatusGap $w={17} />
        <svg width="16" height="16" viewBox="0 0 15 16" fill="none" stroke="#444"><circle cx="7.500" cy="3" r="2" /><path d="M1 4l5 2v4l-3 5M14 4L9 6v4l3 5M2 14L13 6" /></svg>
        <StatusGap $w={4} />
        <StatusText $bold>Acessibilidade: investigar</StatusText>
        <StatusGap $w={914} />
        <svg width="15" height="13" viewBox="0 0 15 13" fill="none" stroke="#555"><path d="M1 10V1h13v6M1 10h5" /><circle cx="10" cy="9.500" r="3" fill="#555" /></svg>
        <StatusGap $w={3} />
        <StatusText>Exibir Configurações</StatusText>
        <StatusGap $w={19} />
        <ViewBtn $active><svg width="14" height="13" viewBox="0 0 14 13" fill="none" stroke="#444"><path d="M.5.500h13v12H.500zM.5 4.500h13M.5 8.500h13M5 .5v12M9 .5v12" /></svg></ViewBtn>
        <ViewBtn><svg width="15" height="13" viewBox="0 0 15 13" fill="none" stroke="#444"><path d="M.5.500h14v12H.500zM3.500 2.500h8v8h-8zM5 5h5M5 7.500h5" /></svg></ViewBtn>
        <ViewBtn><svg width="15" height="13" viewBox="0 0 15 13" fill="none" stroke="#444"><path d="M.5.500h14v12H.500zM4.500.5v6h6v-6M7.500 .5v6" /></svg></ViewBtn>
        <StatusGap $w={7} />
        <ZoomSign>−</ZoomSign>
        <StatusGap $w={4} />
        <Slider><SliderThumb /><SliderTick /></Slider>
        <StatusGap $w={3} />
        <ZoomSign>+</ZoomSign>
        <StatusGap $w={10} />
        <StatusText>90%</StatusText>
      </Status>
    </Page>
  );
}
